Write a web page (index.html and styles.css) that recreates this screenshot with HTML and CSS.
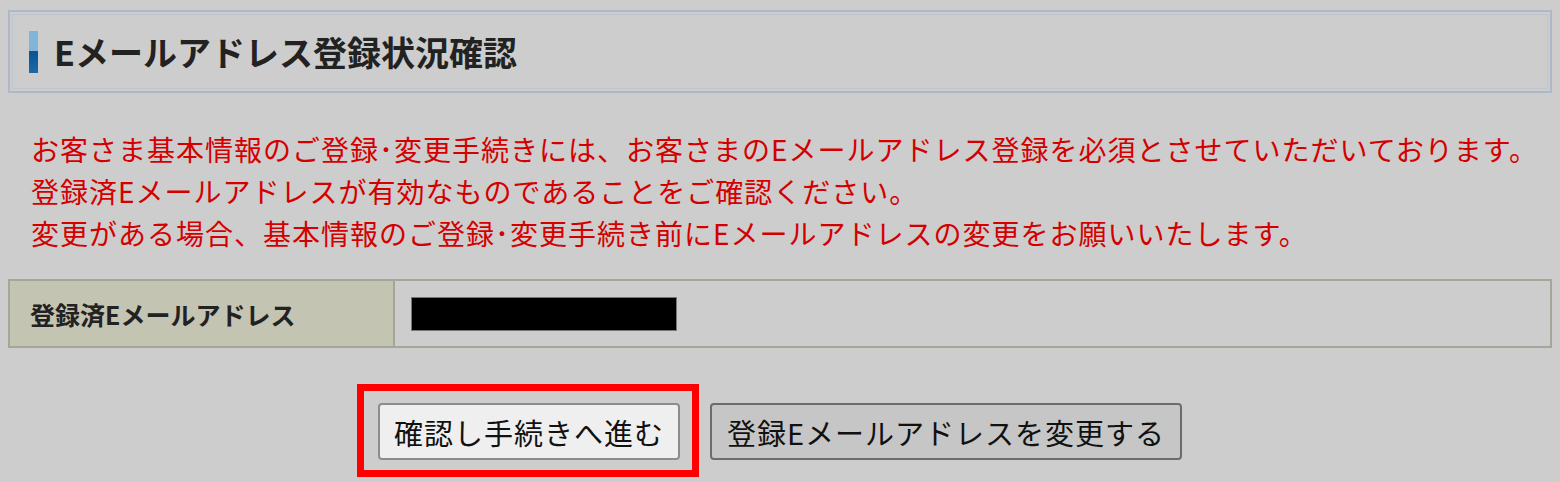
FILE: index.html
```html
<!DOCTYPE html>
<html lang="ja">
  <head>
    <meta charset="UTF-8" />
    <meta name="viewport" content="width=device-width, initial-scale=1.0" />
    <title>Eメールアドレス登録状況確認</title>
    <link rel="stylesheet" href="styles.css">
  </head>
  <body>
    <div class="mail-check">
      <h1 class="mail-check-title">
        <span class="mail-check-mark"></span>
        Eメールアドレス登録状況確認
      </h1>

      <p class="mail-check-notice">
        お客さま基本情報のご登録･変更手続きには、お客さまのEメールアドレス登録を必須とさせていただいております。<br />
        登録済Eメールアドレスが有効なものであることをご確認ください。<br />
        変更がある場合、基本情報のご登録･変更手続き前にEメールアドレスの変更をお願いいたします。
      </p>

      <table class="mail-check-table">
        <tr>
          <th>登録済Eメールアドレス</th>
          <td><span class="mail-check-hidden"></span></td>
        </tr>
      </table>

      <div class="mail-check-actions">
        <div class="mail-check-highlight">
          <button type="button" class="btn-next">確認し手続きへ進む</button>
        </div>
        <button type="button" class="btn-change">登録Eメールアドレスを変更する</button>
      </div>
    </div>
  </body>
</html>
```

FILE: styles.css
```css
body {
  margin: 10px 8px 0;
  padding-bottom: 60px;
  background: #cdcdcd;
  font-family: "Noto Sans CJK JP", "Noto Sans", sans-serif;
  color: #222;
}

.mail-check-title {
  display: flex;
  align-items: center;
  gap: 16px;
  height: 79px;
  margin: 0;
  padding: 0 0 0 19px;
  border: 2px solid #aeb8c8;
  box-shadow: inset 0 0 0 2px #cdcdcd, inset 0 0 0 3px #bec5cf;
  font-size: 34px;
  font-weight: bold;
  line-height: 1;

  .mail-check-mark {
    width: 9px;
    height: 42px;
    background: linear-gradient(#80b5d8 0 48%, #0b5290 48%, #1b6aa8 100%);
  }
}

/* Red notice text */
.mail-check-notice {
  margin: 35px 0 0;
  padding-left: 23px;
  color: #d40000;
  font-size: 28px;
  line-height: 42px;
  letter-spacing: 1px;
}

.mail-check-table {
  width: 100%;
  margin-top: 25px;
  border-collapse: collapse;
  border: 2px solid #a4a698;

  th,
  td {
    height: 65px;
    padding: 0;
    text-align: left;
  }

  th {
    width: 363px;
    padding-left: 20px;
    background: #c4c4b2;
    border-right: 2px solid #a4a698;
    font-size: 25px;
    font-weight: bold;
  }

  td {
    padding-left: 16px;
  }
}

.mail-check-hidden {
  display: block;
  width: 264px;
  height: 32px;
  background: #000;
  border: 1px solid #777;
}

.mail-check-actions {
  display: flex;
  justify-content: center;
  align-items: flex-start;
  gap: 30px;
  margin-top: 55px;

  button {
    height: 57px;
    padding: 0 10px;
    border-radius: 4px;
    font-family: inherit;
    font-size: 29px;
    letter-spacing: 1px;
    color: #111;
    cursor: pointer;
  }
}

.btn-next {
  width: 302px;
  background: #efefef;
  border: 2px solid #8c8c8c;
}

.btn-change {
  width: 472px;
  background: #c6c6c6;
  border: 2px solid #6c6c6c;
}

/* Red annotation frame round the first button, kept out of the layout */
.mail-check-highlight {
  display: flex;
  margin: -19px -19px -17px -21px;
  padding: 12px 12px 10px 14px;
  border: 7px solid #ff0000;
}
```
